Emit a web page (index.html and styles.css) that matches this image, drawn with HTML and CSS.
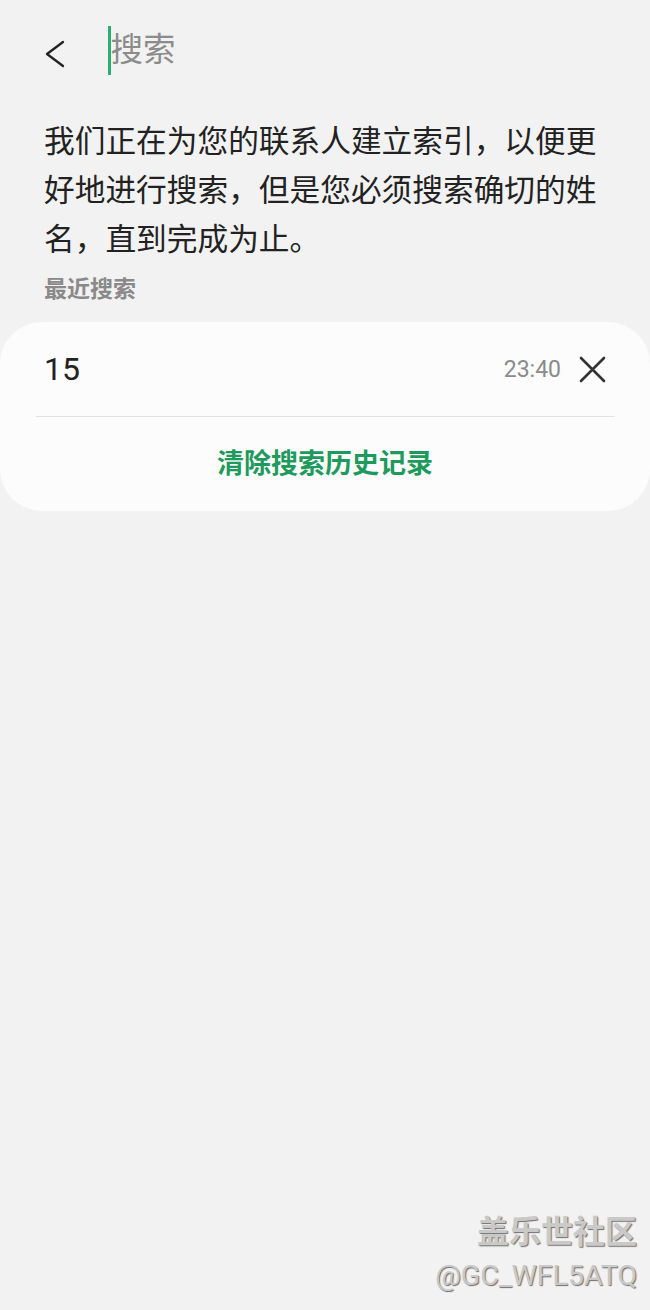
FILE: index.html
```html
<!DOCTYPE html>
<html lang="zh-CN">

<head>
    <meta charset="UTF-8">
    <meta name="viewport" content="width=device-width, initial-scale=1.0">
    <title>搜索</title>
    <link rel="stylesheet" href="styles.css">
</head>

<body>
    <div class="page">
        <div class="header">
            <button class="back" aria-label="返回">
                <svg width="22" height="28" viewBox="0 0 22 28">
                    <path d="M18 2 L2 14 L18 26" fill="none" stroke="#222" stroke-width="2.3" stroke-linecap="round" stroke-linejoin="round" />
                </svg>
            </button>
            <div class="search">
                <span class="cursor"></span>
                <span class="placeholder">搜索</span>
            </div>
        </div>

        <p class="notice">我们正在为您的联系人建立索引，以便更好地进行搜索，但是您必须搜索确切的姓名，直到完成为止。</p>

        <div class="label">最近搜索</div>

        <div class="card">
            <div class="row">
                <span class="query">15</span>
                <span class="time">23:40</span>
                <svg class="remove" width="27" height="27" viewBox="0 0 27 27">
                    <path d="M2 2 L25 25 M25 2 L2 25" fill="none" stroke="#333" stroke-width="2.6" stroke-linecap="round" />
                </svg>
            </div>
            <div class="divider"></div>
            <div class="clear">清除搜索历史记录</div>
        </div>

        <div class="watermark">
            <div class="wm-name">盖乐世社区</div>
            <div class="wm-id">@GC_WFL5ATQ</div>
        </div>
    </div>
</body>

</html>
```

FILE: styles.css
```css
body {
    margin: 0;
    background-color: #f2f2f2;
    font-family: Roboto, "Noto Sans CJK SC", sans-serif;
    color: #222;
}

.page {
    position: relative;
    min-height: 1310px;
}

.header {
    display: flex;
    align-items: center;
    height: 100px;
    padding-left: 45px;
}

.back {
    display: flex;
    padding: 0;
    margin-top: 8px;
    border: none;
    background: none;
}

.search {
    display: flex;
    align-items: center;
    margin-left: 41px;
}

.cursor {
    width: 2.5px;
    height: 49px;
    background-color: #2aae72;
}

.placeholder {
    font-size: 32.5px;
    color: #8c8c8c;
    line-height: 49px;
}

.notice {
    margin: 17px 0 0;
    padding: 0 44px;
    font-size: 30.7px;
    line-height: 49px;
    color: #222;
}

.label {
    margin-top: 11px;
    padding-left: 44px;
    font-size: 23px;
    line-height: 30px;
    font-weight: bold;
    color: #8a8a8a;
}

.card {
    margin-top: 17px;
    background-color: #fcfcfc;
    border-radius: 42px;
}

.row {
    display: flex;
    align-items: center;
    height: 94px;
    padding: 0 44px;
}

.query {
    flex: 1;
    font-size: 32px;
    color: #222;
}

.time {
    margin-right: 18px;
    font-size: 23px;
    color: #8a8a8a;
}

.divider {
    height: 1px;
    margin: 0 36px;
    background-color: #e2e2e2;
}

.clear {
    height: 94px;
    line-height: 94px;
    text-align: center;
    font-size: 27px;
    font-weight: bold;
    color: #1e9a5d;
}

.watermark {
    position: absolute;
    right: 13px;
    top: 1208px;
    text-align: right;
    color: #c9c9c9;
    text-shadow: 1px 1px 1px #6e6e6e;
}

.wm-name {
    font-size: 32px;
    font-weight: bold;
    line-height: 48px;
}

.wm-id {
    font-size: 28.5px;
    line-height: 40px;
}
```
